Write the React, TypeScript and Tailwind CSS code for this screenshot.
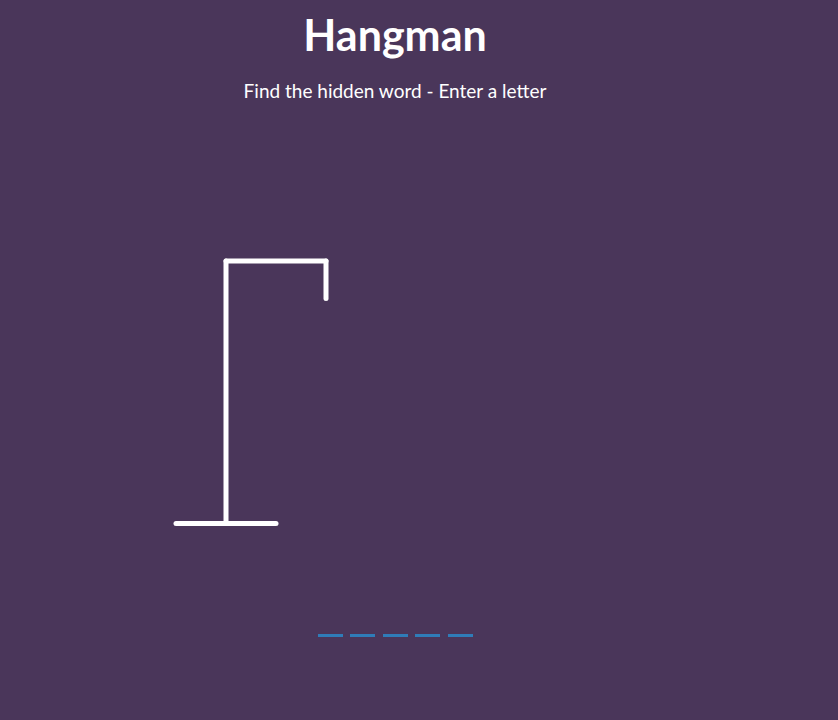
import React from "react";

export default function App() {
  const letters = ["", "", "", "", ""];
  return (
    <div className="min-h-[720px] w-full bg-[#4a365a] text-white overflow-hidden" style={{ fontFamily: "Lato, 'Open Sans', sans-serif" }}>
      <div className="w-[790px] flex flex-col items-center">
        <h1 className="mt-[13px] text-[43px] leading-[43px] font-bold">Hangman</h1>
        <p className="mt-[25px] text-[19px] leading-[19px]">Find the hidden word - Enter a letter</p>
        <div className="w-[563px] mt-[136px] flex flex-col">
          <div className="pl-[37.5px]">
            <svg width="250" height="312.5" viewBox="0 0 200 250" className="block" fill="none" stroke="#ffffff" strokeWidth="4" strokeLinecap="round">
              <line x1="60" y1="20" x2="140" y2="20" />
              <line x1="140" y1="20" x2="140" y2="50" />
              <line x1="60" y1="20" x2="60" y2="230" />
              <line x1="20" y1="230" x2="100" y2="230" />
            </svg>
          </div>
          <div className="mt-[48.5px] flex justify-center">
            {letters.map((l, i) => (
              <span key={i} className="inline-flex items-center justify-center w-[25px] h-[40px] mx-[3.75px] border-b-[3.75px] border-[#2f7cb8] text-[30px]">
                {l}
              </span>
            ))}
          </div>
        </div>
      </div>
    </div>
  );
}
